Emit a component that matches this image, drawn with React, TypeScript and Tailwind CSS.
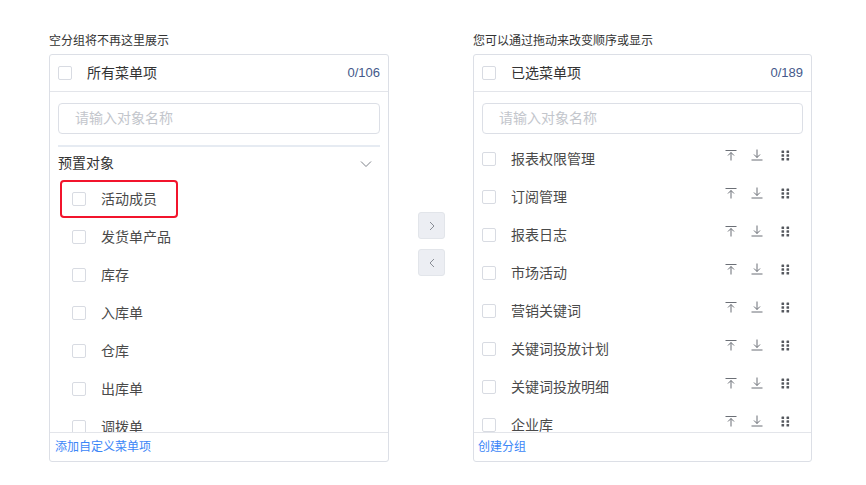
import React from "react";

const FONT = '"Liberation Sans", "Noto Sans CJK SC", sans-serif';

const leftItems = ["活动成员", "发货单产品", "库存", "入库单", "仓库", "出库单", "调拨单"];
const rightItems = [
  "报表权限管理",
  "订阅管理",
  "报表日志",
  "市场活动",
  "营销关键词",
  "关键词投放计划",
  "关键词投放明细",
  "企业库",
];

function Checkbox() {
  return <span className="block w-[14px] h-[14px] shrink-0 rounded-[2px] border border-[#d8dbe2] bg-white" />;
}

function ToTopIcon() {
  return (
    <svg width="12" height="12" viewBox="0 0 12 12" fill="none" stroke="#6b6f76" strokeWidth="1">
      <path d="M0.5 1.5h11" />
      <path d="M6 3.5v8" />
      <path d="M3 6.5l3-3 3 3" />
    </svg>
  );
}

function DownIcon() {
  return (
    <svg width="12" height="12" viewBox="0 0 12 12" fill="none" stroke="#6b6f76" strokeWidth="1">
      <path d="M6 0.5v8" />
      <path d="M3 5.5l3 3 3-3" />
      <path d="M0.5 11h11" />
    </svg>
  );
}

function DragIcon() {
  return (
    <svg width="9" height="11" viewBox="0 0 9 11" fill="#55585e">
      <rect x="0.5" y="0.5" width="2.6" height="2.6" rx="0.5" />
      <rect x="5.5" y="0.5" width="2.6" height="2.6" rx="0.5" />
      <rect x="0.5" y="4.2" width="2.6" height="2.6" rx="0.5" />
      <rect x="5.5" y="4.2" width="2.6" height="2.6" rx="0.5" />
      <rect x="0.5" y="7.9" width="2.6" height="2.6" rx="0.5" />
      <rect x="5.5" y="7.9" width="2.6" height="2.6" rx="0.5" />
    </svg>
  );
}

function SearchInput() {
  return (
    <div className="h-[31px] rounded-[4px] border border-[#dcdfe6] flex items-center px-4 text-[14px] text-[#c3c6cc]">
      请输入对象名称
    </div>
  );
}

function PanelHeader({ label, count }: { label: string; count: string }) {
  return (
    <div className="h-[37px] shrink-0 border-b border-[#e3e5ea] flex items-center pl-2 pr-2">
      <Checkbox />
      <span className="ml-[15px] text-[14px] text-[#333]">{label}</span>
      <span className="ml-auto text-[13px] text-[#44598a]">{count}</span>
    </div>
  );
}

export default function App() {
  return (
    <div className="w-[866px] h-[485px] bg-white pl-[49px] pt-[33px] flex" style={{ fontFamily: FONT }}>
      {/* left */}
      <div className="w-[340px] flex flex-col">
        <div className="h-[21px] text-[12px] text-[#333] leading-[16px]">空分组将不再这里展示</div>
        <div className="h-[408px] rounded-[3px] border border-[#dcdfe6] flex flex-col">
          <PanelHeader label="所有菜单项" count="0/106" />
          <div className="flex-1 overflow-hidden px-2 pt-[11px]">
            <SearchInput />
            <div className="mt-[11px] h-[2px] bg-[#e6ebf2]" />
            <div className="h-[33px] flex items-center justify-between text-[14px] text-[#333]">
              <span>预置对象</span>
              <svg width="12" height="8" viewBox="0 0 12 8" fill="none" stroke="#7d8189" strokeWidth="1" className="mr-[8px]">
                <path d="M1 1.5l5 5 5-5" />
              </svg>
            </div>
            <div className="flex flex-col">
              {leftItems.map((it, i) => (
                <div
                  key={it}
                  className={`h-[38px] w-[118px] ml-[2px] flex items-center pl-[10px] rounded-[4px] border-2 ${
                    i === 0 ? "border-[#f2142c]" : "border-transparent"
                  }`}
                >
                  <Checkbox />
                  <span className="ml-[15px] text-[14px] text-[#4a4a4a] whitespace-nowrap">{it}</span>
                </div>
              ))}
            </div>
          </div>
          <div className="h-[29px] shrink-0 border-t border-[#e3e5ea] flex items-center pl-[5px] text-[12px] text-[#3b86f7]">
            添加自定义菜单项
          </div>
        </div>
      </div>

      {/* middle */}
      <div className="w-[85px] flex flex-col items-center pt-[179px] pl-[2px] pr-[2px] gap-[10px]">
        <button className="w-[27px] h-[27px] rounded-[3px] bg-[#eceef3] border border-[#e2e5ea] flex items-center justify-center">
          <svg width="6" height="10" viewBox="0 0 6 10" fill="none" stroke="#8a8e96" strokeWidth="1">
            <path d="M1 1l4 4-4 4" />
          </svg>
        </button>
        <button className="w-[27px] h-[27px] rounded-[3px] bg-[#eceef3] border border-[#e2e5ea] flex items-center justify-center">
          <svg width="6" height="10" viewBox="0 0 6 10" fill="none" stroke="#8a8e96" strokeWidth="1">
            <path d="M5 1L1 5l4 4" />
          </svg>
        </button>
      </div>

      {/* right */}
      <div className="w-[339px] -ml-[1px] flex flex-col">
        <div className="h-[21px] text-[12px] text-[#333] leading-[16px]">您可以通过拖动来改变顺序或显示</div>
        <div className="h-[408px] rounded-[3px] border border-[#dcdfe6] flex flex-col">
          <PanelHeader label="已选菜单项" count="0/189" />
          <div className="flex-1 overflow-hidden px-2 pt-[11px]">
            <SearchInput />
            <div className="mt-[6px] flex flex-col">
              {rightItems.map((it) => (
                <div key={it} className="h-[38px] flex items-center">
                  <Checkbox />
                  <span className="ml-[15px] text-[14px] text-[#4a4a4a] whitespace-nowrap">{it}</span>
                  <div className="ml-auto flex items-center mr-[13px] mb-[8px]">
                    <ToTopIcon />
                    <span className="ml-[14px]">
                      <DownIcon />
                    </span>
                    <span className="ml-[18px]">
                      <DragIcon />
                    </span>
                  </div>
                </div>
              ))}
            </div>
          </div>
          <div className="h-[29px] shrink-0 border-t border-[#e3e5ea] flex items-center pl-[4px] text-[12px] text-[#3b86f7]">
            创建分组
          </div>
        </div>
      </div>
    </div>
  );
}
